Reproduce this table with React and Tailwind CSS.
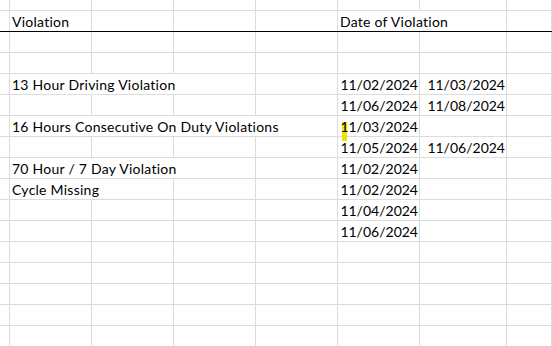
import React from 'react';

const cols = 'grid grid-cols-[10px_82px_82px_82px_82px_82px_87px_1fr]';

// one sheet row: cells = [{span, text, align}]
function Row({ cells, header = false, top = false, mark = false }) {
  return (
    <div
      className={`${cols} ${top ? 'h-[11px]' : 'h-[21px]'} border-b ${
        header ? 'border-black' : 'border-[#dcdcdc]'
      }`}
    >
      {cells.map((c, i) => (
        <div
          key={i}
          className={`relative flex items-end overflow-visible whitespace-nowrap border-r border-[#dcdcdc] pb-[2px] leading-none ${
            c.span === 2 ? 'col-span-2' : c.span === 3 ? 'col-span-3' : c.span === 4 ? 'col-span-4' : ''
          } ${c.align === 'right' ? 'justify-end pr-[1px]' : 'pl-[2px] tracking-[0.25px]'}`}
        >
          {mark && c.mark && (
            <div className="absolute left-[4px] top-[6px] h-[19px] w-[5px] bg-[#f2e000]" />
          )}
          {c.text && <span className="relative">{c.text}</span>}
        </div>
      ))}
    </div>
  );
}

const empty = () => Array.from({ length: 8 }, () => ({}));

export default function App() {
  const rows = [
    { top: true, cells: empty() },
    {
      header: true,
      cells: [{}, { text: 'Violation' }, {}, {}, {}, { span: 2, text: 'Date of Violation' }, {}],
    },
    { cells: empty() },
    { cells: empty() },
    {
      cells: [
        {},
        { span: 3, text: '13 Hour Driving Violation' },
        {},
        { text: '11/02/2024', align: 'right' },
        { text: '11/03/2024', align: 'right' },
        {},
      ],
    },
    {
      cells: [{}, {}, {}, {}, {}, { text: '11/06/2024', align: 'right' }, { text: '11/08/2024', align: 'right' }, {}],
    },
    {
      mark: true,
      cells: [
        {},
        { span: 4, text: '16 Hours Consecutive On Duty Violations' },
        { text: '11/03/2024', align: 'right', mark: true },
        {},
        {},
      ],
    },
    {
      cells: [{}, {}, {}, {}, {}, { text: '11/05/2024', align: 'right' }, { text: '11/06/2024', align: 'right' }, {}],
    },
    {
      cells: [{}, { span: 3, text: '70 Hour / 7 Day Violation' }, {}, { text: '11/02/2024', align: 'right' }, {}, {}],
    },
    {
      cells: [{}, { span: 2, text: 'Cycle Missing' }, {}, {}, { text: '11/02/2024', align: 'right' }, {}, {}],
    },
    {
      cells: [{}, {}, {}, {}, {}, { text: '11/04/2024', align: 'right' }, {}, {}],
    },
    {
      cells: [{}, {}, {}, {}, {}, { text: '11/06/2024', align: 'right' }, {}, {}],
    },
    { cells: empty() },
    { cells: empty() },
    { cells: empty() },
    { cells: empty() },
    { cells: empty() },
  ];

  return (
    <div className="h-[346px] w-[552px] overflow-hidden bg-white text-[14px] text-black [font-family:Lato,'Open_Sans',sans-serif]">
      {rows.map((r, i) => (
        <Row key={i} {...r} />
      ))}
    </div>
  );
}
